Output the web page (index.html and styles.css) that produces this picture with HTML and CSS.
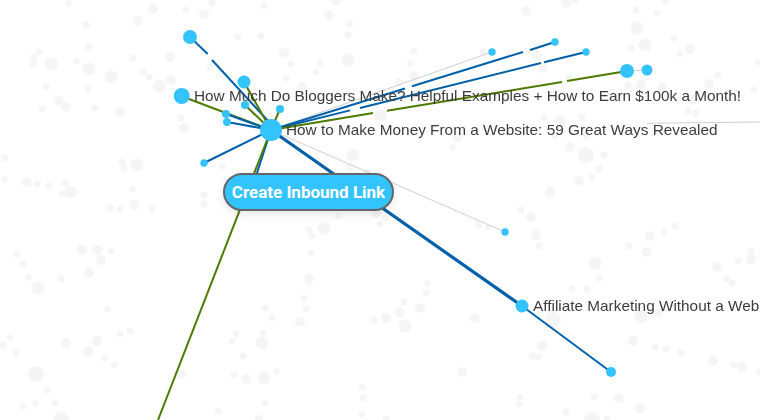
FILE: index.html
```html
<!DOCTYPE html>
<html lang="en">
<head>
<meta charset="utf-8">
<title>Link graph</title>
<link rel="stylesheet" href="styles.css">
</head>
<body>
<main class="graph">
<svg class="canvas" viewBox="0 0 760 420" width="760" height="420" xmlns="http://www.w3.org/2000/svg">
<g class="dots">
<circle cx="69" cy="3" r="3.5"/><circle cx="86" cy="25" r="4"/><circle cx="89" cy="47" r="4"/><circle cx="39" cy="52" r="3.5"/><circle cx="34" cy="57" r="3.5"/><circle cx="33" cy="64" r="3.5"/><circle cx="51" cy="64" r="6.5"/><circle cx="77" cy="61" r="3.5"/><circle cx="89" cy="69" r="6.5"/><circle cx="111" cy="77" r="6.5"/><circle cx="46" cy="87" r="3.5"/><circle cx="88" cy="89" r="3.5"/><circle cx="59" cy="101" r="5"/><circle cx="66" cy="107" r="5"/><circle cx="42" cy="109" r="3.5"/><circle cx="95" cy="108" r="3.5"/><circle cx="120" cy="112" r="5"/><circle cx="133" cy="58" r="3.5"/><circle cx="143" cy="72" r="3.5"/><circle cx="149" cy="77" r="3.5"/><circle cx="159" cy="86" r="6.5"/><circle cx="171" cy="80" r="5"/><circle cx="170" cy="57" r="5"/><circle cx="138" cy="21" r="5"/><circle cx="153" cy="9" r="5"/><circle cx="186" cy="10" r="3.5"/><circle cx="181" cy="118" r="3.5"/><circle cx="184" cy="128" r="5"/><circle cx="5" cy="158" r="3.5"/><circle cx="5" cy="179" r="3.5"/><circle cx="27" cy="182" r="5"/><circle cx="37" cy="184" r="3.5"/><circle cx="49" cy="186" r="3.5"/><circle cx="65" cy="183" r="3.5"/><circle cx="62" cy="194" r="3.5"/><circle cx="71" cy="192" r="6.5"/><circle cx="122" cy="162" r="3.5"/><circle cx="137" cy="165" r="6.5"/><circle cx="124" cy="169" r="3.5"/><circle cx="133" cy="189" r="3.5"/><circle cx="134" cy="205" r="5"/><circle cx="110" cy="208" r="3.5"/><circle cx="120" cy="209" r="3.5"/><circle cx="152" cy="209" r="3.5"/>
<circle cx="17" cy="254" r="3.5"/><circle cx="23" cy="264" r="3.5"/><circle cx="29" cy="277" r="3.5"/><circle cx="38" cy="288" r="6.5"/><circle cx="61" cy="279" r="3.5"/><circle cx="82" cy="250" r="5"/><circle cx="97" cy="250" r="5"/><circle cx="111" cy="251" r="3.5"/><circle cx="101" cy="260" r="5"/><circle cx="89" cy="273" r="5"/><circle cx="107" cy="309" r="3.5"/><circle cx="130" cy="331" r="3.5"/><circle cx="120" cy="334" r="3.5"/><circle cx="97" cy="341" r="5"/><circle cx="66" cy="343" r="5"/><circle cx="88" cy="351" r="5"/><circle cx="10" cy="338" r="3.5"/><circle cx="3" cy="345" r="3.5"/><circle cx="16" cy="353" r="3.5"/><circle cx="105" cy="358" r="3.5"/><circle cx="114" cy="365" r="3.5"/><circle cx="36" cy="374" r="8"/><circle cx="47" cy="390" r="3.5"/><circle cx="35" cy="403" r="3.5"/><circle cx="23" cy="406" r="3.5"/><circle cx="55" cy="403" r="3.5"/><circle cx="61" cy="420" r="8"/><circle cx="181" cy="374" r="5"/><circle cx="236" cy="334" r="3.5"/><circle cx="232" cy="341" r="3.5"/><circle cx="243" cy="356" r="3.5"/><circle cx="234" cy="375" r="3.5"/><circle cx="246" cy="379" r="5"/><circle cx="218" cy="411" r="3.5"/>
<circle cx="338" cy="216" r="3.5"/><circle cx="376" cy="213" r="5"/><circle cx="380" cy="224" r="3.5"/><circle cx="324" cy="228" r="6.5"/><circle cx="309" cy="230" r="3.5"/><circle cx="312" cy="236" r="3.5"/><circle cx="386" cy="218" r="3.5"/><circle cx="311" cy="253" r="3.5"/><circle cx="309" cy="279" r="5"/><circle cx="304" cy="298" r="3.5"/><circle cx="306" cy="309" r="3.5"/><circle cx="265" cy="308" r="3.5"/><circle cx="272" cy="318" r="3.5"/><circle cx="300" cy="322" r="5"/><circle cx="263" cy="333" r="3.5"/><circle cx="262" cy="343" r="6.5"/><circle cx="277" cy="371" r="3.5"/><circle cx="264" cy="378" r="6.5"/><circle cx="265" cy="403" r="3.5"/><circle cx="259" cy="419" r="4"/><circle cx="362" cy="387" r="3.5"/><circle cx="363" cy="398" r="3.5"/><circle cx="362" cy="414" r="3.5"/><circle cx="386" cy="419" r="3.5"/><circle cx="427" cy="283" r="3.5"/><circle cx="426" cy="293" r="3.5"/><circle cx="404" cy="302" r="3.5"/><circle cx="420" cy="308" r="5"/><circle cx="400" cy="313" r="5"/><circle cx="386" cy="318" r="5"/><circle cx="374" cy="320" r="3.5"/><circle cx="405" cy="326" r="6.5"/><circle cx="475" cy="318" r="5"/><circle cx="462" cy="372" r="5"/><circle cx="479" cy="225" r="3.5"/><circle cx="488" cy="227" r="3.5"/>
<circle cx="531" cy="217" r="5"/><circle cx="521" cy="210" r="3.5"/><circle cx="536" cy="235" r="5"/><circle cx="539" cy="246" r="3.5"/><circle cx="675" cy="226" r="3.5"/><circle cx="664" cy="232" r="3.5"/><circle cx="650" cy="236" r="5"/><circle cx="629" cy="246" r="3.5"/><circle cx="647" cy="252" r="5"/><circle cx="595" cy="263" r="6.5"/><circle cx="599" cy="278" r="3.5"/><circle cx="572" cy="289" r="3.5"/><circle cx="587" cy="289" r="3.5"/><circle cx="553" cy="320" r="8"/><circle cx="542" cy="346" r="5"/><circle cx="532" cy="356" r="3.5"/><circle cx="538" cy="357" r="3.5"/><circle cx="641" cy="317" r="6.5"/><circle cx="659" cy="313" r="4"/><circle cx="633" cy="341" r="5"/><circle cx="655" cy="347" r="3.5"/><circle cx="666" cy="349" r="3.5"/><circle cx="681" cy="353" r="3.5"/><circle cx="713" cy="361" r="5"/><circle cx="734" cy="365" r="3.5"/><circle cx="742" cy="367" r="5"/><circle cx="759" cy="372" r="3.5"/><circle cx="717" cy="267" r="5"/><circle cx="738" cy="261" r="3.5"/><circle cx="751" cy="259" r="5"/><circle cx="751" cy="252" r="3.5"/><circle cx="727" cy="279" r="3.5"/><circle cx="732" cy="283" r="3.5"/><circle cx="520" cy="397" r="3.5"/><circle cx="519" cy="404" r="3.5"/><circle cx="566" cy="412" r="3.5"/><circle cx="594" cy="397" r="3.5"/><circle cx="619" cy="398" r="5"/><circle cx="640" cy="409" r="5"/><circle cx="592" cy="420" r="8"/><circle cx="607" cy="419" r="3.5"/>
<circle cx="566" cy="3" r="5"/><circle cx="526" cy="11" r="5"/><circle cx="575" cy="0" r="3.5"/><circle cx="636" cy="10" r="3.5"/><circle cx="657" cy="13" r="3.5"/><circle cx="665" cy="1" r="3.5"/><circle cx="637" cy="28" r="6.5"/><circle cx="645" cy="45" r="6.5"/><circle cx="631" cy="48" r="3.5"/><circle cx="674" cy="38" r="3.5"/><circle cx="680" cy="54" r="3.5"/><circle cx="690" cy="49" r="5"/><circle cx="758" cy="62" r="3.5"/><circle cx="718" cy="75" r="3.5"/><circle cx="709" cy="84" r="5"/><circle cx="754" cy="90" r="3.5"/><circle cx="688" cy="111" r="3.5"/><circle cx="696" cy="113" r="3.5"/><circle cx="693" cy="100" r="5"/><circle cx="662" cy="88" r="5"/><circle cx="641" cy="85" r="5"/><circle cx="628" cy="85" r="3.5"/><circle cx="569" cy="77" r="3.5"/><circle cx="537" cy="56" r="5"/><circle cx="543" cy="68" r="5"/><circle cx="544" cy="118" r="3.5"/><circle cx="560" cy="121" r="6"/><circle cx="582" cy="117" r="3.5"/><circle cx="555" cy="136" r="3.5"/><circle cx="586" cy="136" r="3.5"/><circle cx="570" cy="147" r="5"/><circle cx="586" cy="155" r="8"/><circle cx="604" cy="155" r="3.5"/><circle cx="599" cy="169" r="3.5"/><circle cx="592" cy="177" r="3.5"/><circle cx="579" cy="181" r="5"/><circle cx="550" cy="192" r="5"/>
<circle cx="238" cy="37" r="3.5"/><circle cx="261" cy="36" r="3.5"/><circle cx="284" cy="53" r="5"/><circle cx="291" cy="64" r="3.5"/><circle cx="320" cy="63" r="3.5"/><circle cx="348" cy="60" r="6.5"/><circle cx="316" cy="72" r="3.5"/><circle cx="286" cy="78" r="3.5"/><circle cx="302" cy="87" r="5"/><circle cx="350" cy="24" r="3.5"/><circle cx="348" cy="35" r="3.5"/><circle cx="210" cy="67" r="3.5"/><circle cx="353" cy="155" r="6.5"/><circle cx="222" cy="166" r="3.5"/><circle cx="381" cy="115" r="6"/><circle cx="204" cy="195" r="3.5"/><circle cx="204" cy="204" r="3.5"/><circle cx="399" cy="82" r="4"/><circle cx="414" cy="51" r="3.5"/><circle cx="410" cy="64" r="3.5"/><circle cx="414" cy="76" r="5"/><circle cx="483" cy="52" r="3.5"/><circle cx="527" cy="51" r="3.5"/><circle cx="453" cy="147" r="3.5"/><circle cx="458" cy="137" r="5"/><circle cx="212" cy="3" r="3.5"/><circle cx="204" cy="14" r="5"/><circle cx="264" cy="6" r="3.5"/><circle cx="336" cy="1" r="5"/><circle cx="329" cy="15" r="5"/><circle cx="350" cy="167" r="3.5"/><circle cx="367" cy="172" r="3.5"/>
</g>
<g class="links">
<line class="thin" x1="271" y1="130" x2="492" y2="52"/>
<line class="thin" x1="271" y1="130" x2="505" y2="232"/>
<line class="thin" x1="647" y1="123.3" x2="760" y2="122"/>
<line class="thin" x1="627" y1="71" x2="647" y2="70"/>
<line class="blue" x1="190" y1="37" x2="207.7" y2="54"/>
<line class="blue" x1="212" y1="60" x2="269" y2="122"/>
<line class="green" x1="181" y1="96" x2="271" y2="130"/>
<line class="green" x1="244" y1="82" x2="271" y2="130"/>
<line class="green" x1="245" y1="105" x2="271" y2="130"/>
<line class="blue" x1="226" y1="114" x2="271" y2="130"/>
<line class="blue" x1="227" y1="122" x2="271" y2="130"/>
<line class="green" x1="280" y1="109" x2="271" y2="130"/>
<line class="blue" x1="204" y1="163" x2="271" y2="130"/>
<line class="blue" x1="271" y1="130" x2="256" y2="176"/>
<line class="green" x1="271" y1="130" x2="158" y2="420"/>
<line class="blue" x1="271" y1="130" x2="405" y2="88.5"/>
<line class="blue" x1="412" y1="86.3" x2="523" y2="52"/>
<line class="blue" x1="530" y1="50" x2="555" y2="42"/>
<line class="blue" x1="271" y1="130" x2="350" y2="110.4"/>
<line class="blue" x1="360" y1="108" x2="541" y2="63"/>
<line class="blue" x1="544" y1="62.2" x2="586" y2="52"/>
<line class="green" x1="271" y1="130" x2="373" y2="113"/>
<line class="green" x1="387" y1="110.7" x2="562" y2="82"/>
<line class="green" x1="567" y1="81" x2="627" y2="71"/>
<line class="heavy" x1="271" y1="130" x2="522" y2="306"/>
<line class="blue" x1="522" y1="306" x2="611" y2="372"/>
</g>
<g class="nodes">
<circle cx="190" cy="37" r="7"/><circle cx="181.7" cy="96" r="8"/><circle cx="244" cy="82" r="6.5"/><circle cx="245" cy="105" r="4"/><circle cx="226" cy="114" r="4"/><circle cx="227" cy="122" r="4"/><circle cx="280" cy="109" r="4"/><circle cx="204" cy="163" r="3.7"/><circle cx="271" cy="130" r="11"/><circle cx="492" cy="52" r="3.7"/><circle cx="555" cy="42" r="3.7"/><circle cx="586" cy="52" r="3.7"/><circle cx="627" cy="71" r="7"/><circle cx="647" cy="70" r="5.5"/><circle cx="505" cy="232" r="3.7"/><circle cx="522" cy="306" r="6.5"/><circle cx="611" cy="372" r="5"/>
</g>
<g class="labels">
<text x="194" y="101">How Much Do Bloggers Make? Helpful Examples + How to Earn $100k a Month!</text>
<text x="286" y="135">How to Make Money From a Website: 59 Great Ways Revealed</text>
<text x="533" y="311">Affiliate Marketing Without a Website</text>
</g>
</svg>
<button class="inbound" type="button">Create Inbound Link</button>
</main>
</body>
</html>
```
FILE: styles.css
```css
html, body {
  margin: 0;
  padding: 0;
  background: #fff;
  overflow: hidden;
}
.graph {
  position: relative;
  width: 760px;
  height: 420px;
  overflow: hidden;
}
.canvas {
  display: block;
  filter: blur(0.35px);
}
.dots circle {
  fill: #f5f5f5;
}
.links line {
  fill: none;
}
.thin {
  stroke: #cfcfcf;
  stroke-width: 1;
}
.blue {
  stroke: #0060a9;
  stroke-width: 2;
}
.heavy {
  stroke: #0060a9;
  stroke-width: 3.2;
}
.green {
  stroke: #4d7a00;
  stroke-width: 2;
}
.nodes circle {
  fill: #33c3ff;
}
.labels text {
  font-family: "Liberation Sans", Arial, sans-serif;
  font-size: 15.35px;
  fill: #3c3c3c;
}
.inbound {
  position: absolute;
  left: 223px;
  top: 173px;
  width: 171px;
  height: 38px;
  box-sizing: border-box;
  padding: 0;
  border: 2px solid #666;
  border-radius: 19px;
  background: #33c3ff;
  color: #fff;
  font-family: Roboto, "Liberation Sans", sans-serif;
  font-size: 17px;
  font-weight: 700;
  box-shadow: 0 3px 10px rgba(0, 0, 0, 0.1);
}
```
